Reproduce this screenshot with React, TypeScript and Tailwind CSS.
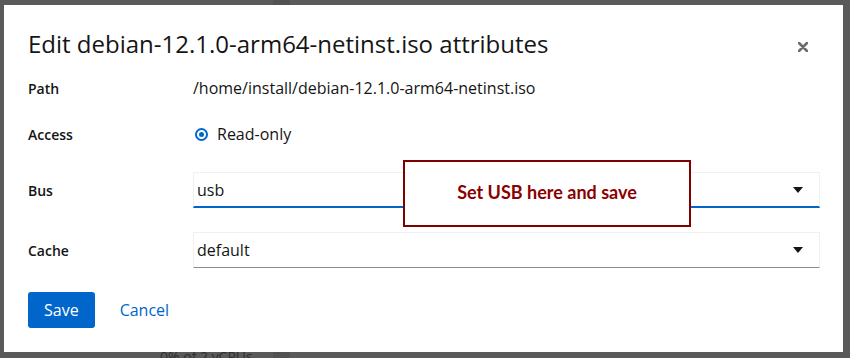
import React from "react";

const Caret = () => (
  <svg width="10" height="6" viewBox="0 0 10 6" className="shrink-0">
    <path d="M0 0h10L5 6z" fill="#151515" />
  </svg>
);

function Select({ value, active }: { value: string; active?: boolean }) {
  return (
    <div
      className={
        active
          ? "flex h-[36px] items-center justify-between border border-[#f0f0f0] border-b-2 border-b-[#0066cc] pl-[3px] pr-[16px]"
          : "flex h-[36px] items-center justify-between border border-[#f0f0f0] border-b-[#8a8d90] pl-[3px] pr-[16px]"
      }
    >
      <span className="text-[16px] text-[#151515]">{value}</span>
      <Caret />
    </div>
  );
}

function Row({ label, children, className }: { label: string; children: React.ReactNode; className?: string }) {
  return (
    <div className={"grid grid-cols-[165px_1fr] items-center " + (className ?? "")}>
      <span className="text-[14px] font-semibold text-[#151515]">{label}</span>
      {children}
    </div>
  );
}

export default function App() {
  return (
    <div
      className="relative h-[358px] w-[850px] overflow-hidden bg-[#5a5a5a]"
      style={{ fontFamily: '"Open Sans", sans-serif' }}
    >
      {/* page behind the backdrop */}
      <div className="absolute left-[273px] top-0 h-full w-[17px] bg-[#525252]" />
      <div className="absolute left-[160px] top-[346px] text-[14px] text-[#2e2e2e]">0% of 2 vCPUs</div>

      <div className="absolute left-[4px] top-[5px] flex h-[347px] w-[839px] flex-col bg-white pl-[24px] pr-[23px]">
        <div className="flex h-[65px] items-start justify-between pt-[23px]">
          <h1 className="text-[24px] leading-[32px] text-[#151515]">
            Edit debian-12.1.0-arm64-netinst.iso attributes
          </h1>
          <svg width="10" height="10" viewBox="0 0 10 10" className="mr-[12px] mt-[14px]">
            <path d="M1 1l8 8M9 1l-8 8" stroke="#6a6e73" strokeWidth="2.6" strokeLinecap="round" />
          </svg>
        </div>

        <Row label="Path" className="h-[36px]">
          <span className="text-[16px] text-[#151515]">/home/install/debian-12.1.0-arm64-netinst.iso</span>
        </Row>

        <Row label="Access" className="mt-[10px] h-[36px]">
          <div className="flex items-center gap-[9px] pl-[2px]">
            <span className="flex h-[13px] w-[13px] items-center justify-center rounded-full border-2 border-[#0066cc]">
              <span className="h-[5px] w-[5px] rounded-full bg-[#0066cc]" />
            </span>
            <span className="text-[16px] text-[#151515]">Read-only</span>
          </div>
        </Row>

        <Row label="Bus" className="mt-[20px]">
          <Select value="usb" active />
        </Row>

        <Row label="Cache" className="mt-[24px]">
          <Select value="default" />
        </Row>

        <div className="mt-[24px] flex items-center gap-[25px]">
          <button className="h-[36px] rounded-[3px] bg-[#0066cc] px-[16px] text-[16px] text-white">Save</button>
          <button className="text-[16px] text-[#0066cc]">Cancel</button>
        </div>
      </div>

      {/* annotation callout */}
      <div
        className="absolute left-[403px] top-[160px] flex h-[67px] w-[288px] items-center justify-center border-2 border-[#800000] bg-white pb-[2px]"
        style={{ fontFamily: "Lato, sans-serif" }}
      >
        <span className="text-[18px] font-bold text-[#8b0000]">Set USB here and save</span>
      </div>
    </div>
  );
}
